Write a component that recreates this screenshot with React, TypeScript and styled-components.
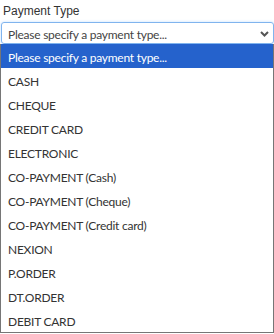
import * as React from 'react'
import styled, { createGlobalStyle } from 'styled-components'

const Global = createGlobalStyle`
  html, body { margin: 0; padding: 0; background: #fff; }
  body { width: 274px; height: 334px; overflow: hidden; }
`

const Field = styled.div`
  display: flex;
  flex-direction: column;
  padding-top: 3px;
`

const Label = styled.label`
  font-family: "Liberation Sans", Arial, sans-serif;
  font-size: 12px;
  color: #333;
  padding-left: 3px;
  height: 19px;
  line-height: 16px;
`

const SelectBox = styled.div`
  margin-left: 1px;
  width: 273px;
  height: 22px;
  box-sizing: border-box;
  border: 1px solid #80b4ee;
  border-radius: 3px;
  display: flex;
  align-items: center;
  padding: 2px 4px 0 6px;
  font-family: Lato, "Noto Sans", sans-serif;
  font-size: 12px;
  letter-spacing: -0.25px;
  color: #444;
  box-shadow: 0 0 3px rgba(0, 123, 255, 0.25);
`

const SelectText = styled.span`
  flex: 1;
`

const List = styled.ul`
  list-style: none;
  margin: 0;
  padding: 0;
  width: 274px;
  box-sizing: border-box;
  border: 1px solid #767676;
  border-top: none;
`

const Option = styled.li<{ $active?: boolean }>`
  height: 24px;
  box-sizing: border-box;
  display: flex;
  align-items: center;
  padding: 3px 0 0 7px;
  font-family: Lato, "Noto Sans", sans-serif;
  font-size: 12px;
  letter-spacing: -0.25px;
  color: ${p => (p.$active ? '#fff' : '#333')};
  background: ${p => (p.$active ? '#2562cc' : '#fff')};
`

const Chevron = () => (
  <svg width="9" height="6" viewBox="0 0 9 6">
    <path d="M1 1 L4.5 4.5 L8 1" fill="none" stroke="#555" strokeWidth="2" />
  </svg>
)

const options = [
  'Please specify a payment type...',
  'CASH',
  'CHEQUE',
  'CREDIT CARD',
  'ELECTRONIC',
  'CO-PAYMENT (Cash)',
  'CO-PAYMENT (Cheque)',
  'CO-PAYMENT (Credit card)',
  'NEXION',
  'P.ORDER',
  'DT.ORDER',
  'DEBIT CARD',
]

export default function App() {
  return (
    <>
      <Global />
      <Field>
        <Label>Payment Type</Label>
        <SelectBox>
          <SelectText>Please specify a payment type...</SelectText>
          <Chevron />
        </SelectBox>
        <List>
          {options.map((o, i) => (
            <Option key={o} $active={i === 0}>{o}</Option>
          ))}
        </List>
      </Field>
    </>
  )
}
